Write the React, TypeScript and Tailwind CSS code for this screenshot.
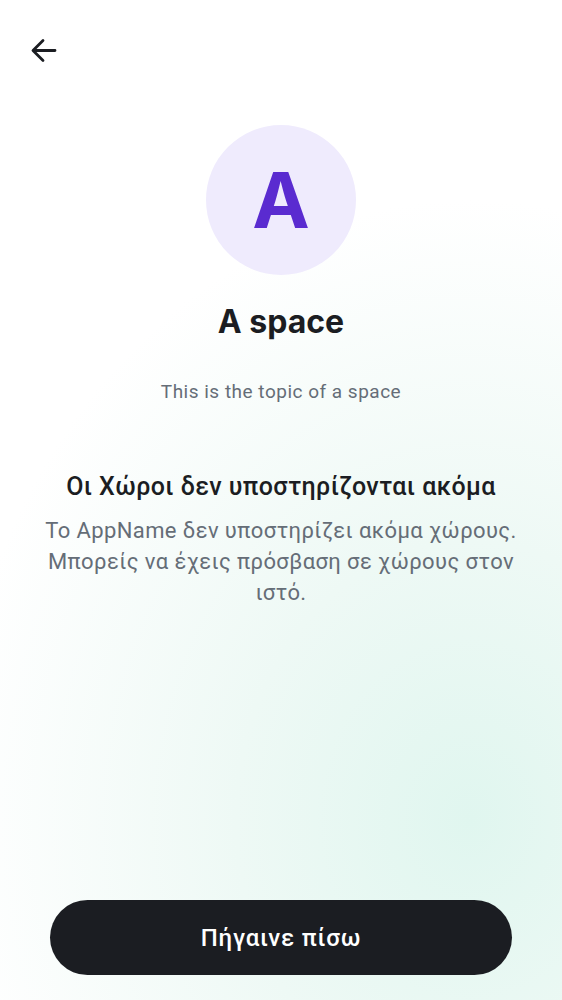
export default function App() {
  return (
    <div
      className="relative flex h-[1000px] w-[562px] flex-col overflow-hidden bg-white bg-[radial-gradient(ellipse_520px_620px_at_470px_820px,#e0f6ef_0%,#eef9f5_45%,#ffffff_100%)] font-['Roboto','Noto_Sans',sans-serif]"
    >
      {/* Top bar */}
      <div className="flex h-[100px] items-start px-[30px] pt-[36px]">
        <svg width="28" height="28" viewBox="0 0 28 28" fill="none" className="text-[#1b1d22]">
          <path
            d="M25 14.5H3.5M13 4.5L3 14.5L13 24.5"
            stroke="currentColor"
            strokeWidth="2.8"
            strokeLinecap="round"
            strokeLinejoin="round"
          />
        </svg>
      </div>

      {/* Space header */}
      <div className="flex flex-col items-center">
        <div className="mt-[25px] flex h-[150px] w-[150px] items-center justify-center rounded-full bg-[#efebfd]">
          <span className="font-['Inter',sans-serif] text-[77px] font-bold leading-none text-[#5a2bd0]">A</span>
        </div>
        <h1 className="mt-[27px] font-['Inter',sans-serif] text-[32px] font-bold leading-[40px] text-[#1b1d22]">
          A space
        </h1>
        <p className="mt-[37px] text-[19px] leading-[26px] tracking-[0.5px] text-[#656d77]">
          This is the topic of a space
        </p>
      </div>

      {/* Unsupported message */}
      <div className="mt-[66px] flex flex-col items-center px-[30px] text-center">
        <h2 className="text-[25px] font-medium leading-[32px] tracking-[0.4px] text-[#1b1d22]">
          Οι Χώροι δεν υποστηρίζονται ακόμα
        </h2>
        <p className="mt-[12px] text-[22px] leading-[31px] tracking-[0.4px] text-[#656d77]">
          Το AppName δεν υποστηρίζει ακόμα χώρους. Μπορείς να έχεις πρόσβαση σε χώρους στον ιστό.
        </p>
      </div>

      {/* Footer button */}
      <div className="mt-auto px-[50px] pb-[25px]">
        <button className="flex h-[75px] w-full items-center justify-center rounded-full bg-[#1b1d22] text-[24px] font-medium tracking-[0.8px] text-white">
          Πήγαινε πίσω
        </button>
      </div>
    </div>
  )
}
